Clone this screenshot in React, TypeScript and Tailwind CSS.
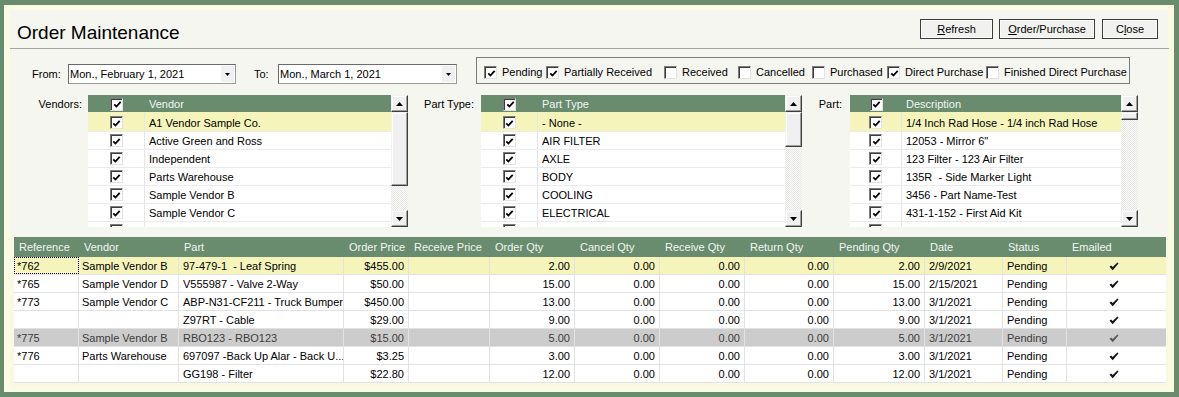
import React from 'react';

function Check({ checked = true }: { checked?: boolean }) {
  return (
    <span className="relative inline-block h-[13px] w-[13px] shrink-0 border border-t-[#7c7c7c] border-l-[#7c7c7c] border-b-[#e2e2e2] border-r-[#e2e2e2] bg-white shadow-[inset_1px_1px_0_#3c3c3c]">
      {checked && (
        <svg width="9" height="9" viewBox="0 0 9 9" className="absolute left-[1.5px] top-[1.5px]">
          <path d="M1.3 4.3 L3.4 6.5 L7.7 1.9" fill="none" stroke="#000" strokeWidth="1.8" />
        </svg>
      )}
    </span>
  );
}

function ScrollBtn({ up }: { up: boolean }) {
  return (
    <div className="flex h-[17px] w-[17px] shrink-0 items-center justify-center border border-t-[#f2f2f2] border-l-[#f2f2f2] border-b-[#3e3e3e] border-r-[#3e3e3e] bg-[#f0f0f0] shadow-[inset_-1px_-1px_0_#a0a0a0,inset_1px_1px_0_#ffffff]">
      <svg width="7" height="4" viewBox="0 0 7 4">
        <path d={up ? 'M0 4 L3.5 0 L7 4Z' : 'M0 0 L7 0 L3.5 4Z'} fill="#000" />
      </svg>
    </div>
  );
}

function ScrollBar({ thumb }: { thumb: string }) {
  return (
    <div className="flex h-full w-[17px] shrink-0 flex-col">
      <ScrollBtn up />
      <div className="flex flex-1 flex-col bg-[repeating-conic-gradient(#e7e7e5_0_25%,#fbfbfa_0_50%)] bg-size-[2px_2px]">
        <div className={`${thumb} w-[17px] border border-t-[#f2f2f2] border-l-[#f2f2f2] border-b-[#3e3e3e] border-r-[#3e3e3e] bg-[#f0f0f0] shadow-[inset_-1px_-1px_0_#a0a0a0,inset_1px_1px_0_#ffffff]`} />
      </div>
      <ScrollBtn up={false} />
    </div>
  );
}

function CheckList({
  width,
  checkCol,
  title,
  items,
  thumb,
}: {
  width: string;
  checkCol: string;
  title: string;
  items: string[];
  thumb: string;
}) {
  return (
    <div className="flex h-[132px] shrink-0">
      <div className={`${width} flex h-full flex-col overflow-hidden bg-white`}>
        <div className="flex h-[17px] shrink-0 items-center bg-[#698c6e] text-[#f3f5f3]">
          <div className={`${checkCol} flex h-full items-center justify-center pt-[1px]`}>
            <Check />
          </div>
          <div className="pl-[4px] pt-[1px]">{title}</div>
        </div>
        {items.map((it, i) => (
          <div
            key={i}
            className={`flex shrink-0 border-b border-[#ebebeb] ${i === 0 ? 'h-[20px] bg-[#f5f5bb]' : 'h-[18px] bg-white'}`}
          >
            <div className={`${checkCol} flex h-full items-center justify-center border-r border-[#e6e6e6] ${i === 0 ? 'pt-[2px]' : ''}`}>
              <Check />
            </div>
            <div className={`flex items-center whitespace-pre pl-[4px] ${i === 0 ? 'pt-[4px]' : 'pt-[2px]'}`}>{it}</div>
          </div>
        ))}
        <div className="flex h-[18px] shrink-0 bg-white">
          <div className={`${checkCol} flex h-full items-start justify-center border-r border-[#e6e6e6] pt-[2px]`}>
            <Check />
          </div>
        </div>
      </div>
      <ScrollBar thumb={thumb} />
    </div>
  );
}

function Btn({ w, children }: { w: string; children: React.ReactNode }) {
  return (
    <div className={`${w} flex h-[20px] items-center justify-center border border-[#3c3c3c] bg-[#f1f1ef] shadow-[inset_0_0_0_1px_#fbfbfb]`}>
      <span>{children}</span>
    </div>
  );
}

function DateBox({ w, text }: { w: string; text: string }) {
  return (
    <div className={`${w} flex h-[20px] shrink-0 items-center border border-t-[#6a6a6a] border-l-[#6a6a6a] border-b-[#9a9a9a] border-r-[#9a9a9a] bg-white pl-[1px]`}>
      <span className="flex-1 whitespace-nowrap">{text}</span>
      <div className="mr-[1px] flex h-[16px] w-[13px] items-center justify-center bg-[#f0f0f0]">
        <svg width="5" height="3" viewBox="0 0 5 3">
          <path d="M0 0 L5 0 L2.5 3Z" fill="#000" />
        </svg>
      </div>
    </div>
  );
}

const statuses = [
  { label: 'Pending', c: true, w: 'w-[62px]' },
  { label: 'Partially Received', c: true, w: 'w-[118px]' },
  { label: 'Received', c: false, w: 'w-[74px]' },
  { label: 'Cancelled', c: false, w: 'w-[74px]' },
  { label: 'Purchased', c: false, w: 'w-[75px]' },
  { label: 'Direct Purchase', c: true, w: 'w-[99px]' },
  { label: 'Finished Direct Purchase', c: false, w: '' },
];

const cols = [
  { label: 'Reference', w: 'w-[65px]' },
  { label: 'Vendor', w: 'w-[100px]' },
  { label: 'Part', w: 'w-[165px]' },
  { label: 'Order Price', w: 'w-[65px]' },
  { label: 'Receive Price', w: 'w-[81px]' },
  { label: 'Order Qty', w: 'w-[85px]' },
  { label: 'Cancel Qty', w: 'w-[85px]' },
  { label: 'Receive Qty', w: 'w-[85px]' },
  { label: 'Return Qty', w: 'w-[89px]' },
  { label: 'Pending Qty', w: 'w-[91px]' },
  { label: 'Date', w: 'w-[78px]' },
  { label: 'Status', w: 'w-[64px]' },
  { label: 'Emailed', w: 'w-[99px]' },
];

type Row = {
  r: string;
  v: string;
  p: string;
  price: string;
  q: string;
  d: string;
  tone?: 'y' | 'g';
};

const rows: Row[] = [
  { r: '*762', v: 'Sample Vendor B', p: '97-479-1  - Leaf Spring', price: '$455.00', q: '2.00', d: '2/9/2021', tone: 'y' },
  { r: '*765', v: 'Sample Vendor D', p: 'V555987 - Valve 2-Way', price: '$50.00', q: '15.00', d: '2/15/2021' },
  { r: '*773', v: 'Sample Vendor C', p: 'ABP-N31-CF211 - Truck Bumper', price: '$450.00', q: '13.00', d: '3/1/2021' },
  { r: '', v: '', p: 'Z97RT - Cable', price: '$29.00', q: '9.00', d: '3/1/2021' },
  { r: '*775', v: 'Sample Vendor B', p: 'RBO123 - RBO123', price: '$15.00', q: '5.00', d: '3/1/2021', tone: 'g' },
  { r: '*776', v: 'Parts Warehouse', p: '697097 -Back Up Alar - Back U...', price: '$3.25', q: '3.00', d: '3/1/2021' },
  { r: '', v: '', p: 'GG198 - Filter', price: '$22.80', q: '12.00', d: '3/1/2021' },
];

const cell = 'flex h-full shrink-0 items-center overflow-hidden whitespace-pre border-r border-[#e2e2e2] pt-[1px]';

function Tick({ gray }: { gray?: boolean }) {
  return (
    <svg width="10" height="9" viewBox="0 0 10 9">
      <path d="M0.5 4.8 L2.1 3.4 L3.7 5.1 L8.4 0.4 L9.5 1.5 L3.7 8.3 Z" fill={gray ? '#5a5a5a' : '#111'} />
    </svg>
  );
}

export default function App() {
  return (
    <div className="h-[397px] w-[1179px] bg-[#698c6e] pb-[5px] pl-[4px] pr-[5px] pt-[5px] font-['Tahoma','Liberation_Sans',Arial,sans-serif] text-[11px] text-black">
      <div className="flex h-full flex-col border-[5px] border-l-[6px] border-[#fbfbe4] bg-[#f6f6f1]">
        {/* title row */}
        <div className="flex h-[38px] shrink-0 items-start pl-[7px] pr-[11px]">
          <div className="mt-[13px] text-[19px] leading-[19px]">Order Maintenance</div>
          <div className="ml-auto mt-[9px] flex gap-[6px]">
            <Btn w="w-[73px]">
              <span className="underline">R</span>efresh
            </Btn>
            <Btn w="w-[96px]">
              <span className="underline">O</span>rder/Purchase
            </Btn>
            <Btn w="w-[56px] ml-[1px]">
              C<span className="underline">l</span>ose
            </Btn>
          </div>
        </div>
        <div className="h-px shrink-0 bg-[#a3a3a3]" />

        {/* filter row */}
        <div className="mt-[8px] flex h-[27px] shrink-0 items-end">
          <div className="flex h-[20px] items-center">
            <span className="w-[58px] shrink-0 pl-[22px]">From:</span>
            <DateBox w="w-[168px]" text="Mon., February 1, 2021" />
            <span className="w-[42px] shrink-0 pl-[18px]">To:</span>
            <DateBox w="w-[179px]" text="Mon., March 1, 2021" />
          </div>
          <div className="ml-[19px] flex h-[27px] w-[654px] items-start border border-[#7b7b7b] pl-[7px] pt-[8px]">
            {statuses.map((s) => (
              <div key={s.label} className={`${s.w} flex shrink-0 items-center gap-[5px] whitespace-nowrap leading-[13px]`}>
                <Check checked={s.c} />
                <span>{s.label}</span>
              </div>
            ))}
          </div>
        </div>

        {/* lists */}
        <div className="mt-[11px] flex h-[132px] shrink-0">
          <div className="flex h-[18px] w-[78px] shrink-0 items-center justify-end pr-[6px]">Vendors:</div>
          <CheckList
            width="w-[303px]"
            checkCol="w-[57px]"
            title="Vendor"
            thumb="h-[74px]"
            items={[
              'A1 Vendor Sample Co.',
              'Active Green and Ross',
              'Independent',
              'Parts Warehouse',
              'Sample Vendor B',
              'Sample Vendor C',
            ]}
          />
          <div className="flex h-[18px] w-[73px] shrink-0 items-center justify-end pr-[7px]">Part Type:</div>
          <CheckList
            width="w-[304px]"
            checkCol="w-[57px]"
            title="Part Type"
            thumb="h-[35px]"
            items={['- None -', 'AIR FILTER', 'AXLE', 'BODY', 'COOLING', 'ELECTRICAL']}
          />
          <div className="flex h-[18px] w-[48px] shrink-0 items-center justify-end pr-[8px]">Part:</div>
          <CheckList
            width="w-[271px]"
            checkCol="w-[52px]"
            title="Description"
            thumb="h-[8px]"
            items={[
              '1/4 Inch Rad Hose - 1/4 inch Rad Hose',
              '12053 - Mirror 6"',
              '123 Filter - 123 Air Filter',
              '135R  - Side Marker Light',
              '3456 - Part Name-Test',
              '431-1-152 - First Aid Kit',
            ]}
          />
        </div>

        {/* grid */}
        <div className="mt-[10px] flex flex-1 flex-col bg-[#f9f9e3] pb-[4px] pl-[4px] pr-[3px]">
          <div className="flex h-full flex-col bg-white">
            <div className="flex h-[20px] shrink-0 bg-[#698c6e] text-[#f3f5f3]">
              {cols.map((c) => (
                <div key={c.label} className={`${c.w} flex h-full shrink-0 items-center whitespace-nowrap pl-[5px] pt-[1px]`}>
                  {c.label}
                </div>
              ))}
            </div>
            {rows.map((r, i) => {
              const bg = r.tone === 'y' ? 'bg-[#f5f5bb]' : r.tone === 'g' ? 'bg-[#cccccc] text-[#3c3c3c]' : 'bg-white';
              return (
                <div key={i} className={`flex h-[18px] shrink-0 border-b border-[#e2e2e2] ${bg}`}>
                  <div className={`${cell} w-[65px] pl-[3px] ${i === 0 ? 'outline-1 outline-dotted outline-black -outline-offset-1' : ''}`}>{r.r}</div>
                  <div className={`${cell} w-[100px] pl-[3px]`}>{r.v}</div>
                  <div className={`${cell} w-[165px] pl-[4px]`}>{r.p}</div>
                  <div className={`${cell} w-[65px] justify-end pr-[4px]`}>{r.price}</div>
                  <div className={`${cell} w-[81px]`} />
                  <div className={`${cell} w-[85px] justify-end pr-[4px]`}>{r.q}</div>
                  <div className={`${cell} w-[85px] justify-end pr-[4px]`}>0.00</div>
                  <div className={`${cell} w-[85px] justify-end pr-[4px]`}>0.00</div>
                  <div className={`${cell} w-[89px] justify-end pr-[4px]`}>0.00</div>
                  <div className={`${cell} w-[91px] justify-end pr-[4px]`}>{r.q}</div>
                  <div className={`${cell} w-[78px] pl-[4px]`}>{r.d}</div>
                  <div className={`${cell} w-[64px] pl-[4px]`}>Pending</div>
                  <div className={`${cell} w-[99px] justify-center border-r-0 pr-[5px]`}>
                    <Tick gray={r.tone === 'g'} />
                  </div>
                </div>
              );
            })}
          </div>
        </div>
      </div>
    </div>
  );
}
